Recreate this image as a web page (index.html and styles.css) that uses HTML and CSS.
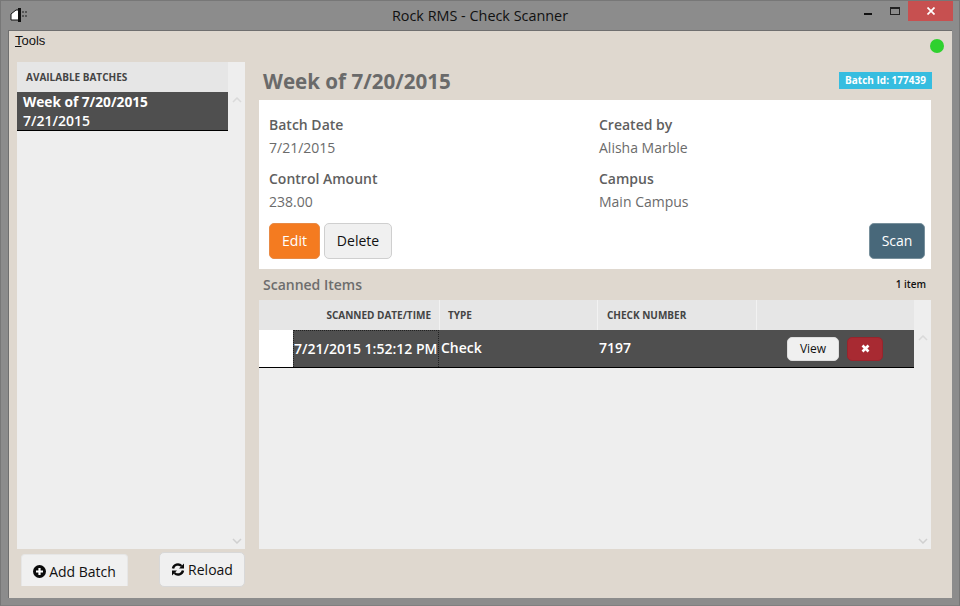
FILE: index.html
```html
<!DOCTYPE html>
<html lang="en">
<head>
<meta charset="utf-8">
<title>Rock RMS - Check Scanner</title>
<link rel="stylesheet" href="styles.css">
</head>
<body>
<div class="window">
  <header class="titlebar">
    <svg class="app-icon" width="18" height="14" viewBox="0 0 18 14"><path d="M1 12V6l5-4h3v10z" fill="#fff" stroke="#111" stroke-width="1"/><rect x="8" y="0" width="3" height="14" fill="#111"/><path d="M12 3h2v2h-2zM15 3h2v2h-2zM12 7h2v2h-2zM15 7h2v2h-2z" fill="#555"/></svg>
    <div class="title">Rock RMS - Check Scanner</div>
    <div class="controls">
      <svg class="ctl-min" width="8" height="2" viewBox="0 0 8 2"><rect width="8" height="2" fill="#111"/></svg>
      <svg class="ctl-max" width="10" height="8" viewBox="0 0 10 8"><rect x=".5" y=".5" width="9" height="7" fill="none" stroke="#222"/><rect x="0" y="0" width="10" height="2" fill="#222"/></svg>
      <div class="ctl-close"><svg width="8" height="8" viewBox="0 0 8 8"><path d="M.5.5l7 7M7.5.5l-7 7" stroke="#fff" stroke-width="1.7"/></svg></div>
    </div>
  </header>
  <div class="client">
    <div class="menubar"><span class="menu-item"><u>T</u>ools</span><span class="status-dot"></span></div>
    <div class="columns">
      <aside class="sidebar">
        <div class="batch-panel">
          <div class="batch-list">
            <div class="batch-head">AVAILABLE BATCHES</div>
            <div class="batch-row">
              <div class="batch-name">Week of 7/20/2015</div>
              <div class="batch-date">7/21/2015</div>
            </div>
          </div>
          <div class="scroll">
            <svg class="chev chev-up" width="10" height="6" viewBox="0 0 10 6"><path d="M1 5l4-4 4 4" fill="none" stroke="#dadada" stroke-width="1.5"/></svg>
            <svg class="chev" width="10" height="6" viewBox="0 0 10 6"><path d="M1 1l4 4 4-4" fill="none" stroke="#d0d0d0" stroke-width="1.5"/></svg>
          </div>
        </div>
        <div class="side-actions">
          <button class="side-btn add"><svg width="13" height="13" viewBox="0 0 13 13"><circle cx="6.5" cy="6.5" r="6.5" fill="#0a0a0a"/><path d="M3 6.5h7M6.5 3v7" stroke="#fff" stroke-width="2.2"/></svg>Add Batch</button>
          <button class="side-btn reload"><svg width="14" height="13" viewBox="0 0 14 13"><path d="M2 5.5A5 5 0 0 1 10.5 3" fill="none" stroke="#0a0a0a" stroke-width="2.4"/><path d="M13 .5v5H8z" fill="#0a0a0a"/><path d="M12 7.5A5 5 0 0 1 3.500 10" fill="none" stroke="#0a0a0a" stroke-width="2.4"/><path d="M1 12.500v-5h5z" fill="#0a0a0a"/></svg>Reload</button>
        </div>
      </aside>
      <main class="main">
        <div class="page-head">
          <h1>Week of 7/20/2015</h1>
          <span class="badge">Batch Id: 177439</span>
        </div>
        <section class="card">
          <div class="facts">
            <div class="fact"><div class="fact-label">Batch Date</div><div class="fact-value">7/21/2015</div></div>
            <div class="fact"><div class="fact-label">Created by</div><div class="fact-value">Alisha Marble</div></div>
            <div class="fact"><div class="fact-label">Control Amount</div><div class="fact-value">238.00</div></div>
            <div class="fact"><div class="fact-label">Campus</div><div class="fact-value">Main Campus</div></div>
          </div>
          <div class="card-actions">
            <button class="btn btn-edit">Edit</button>
            <button class="btn btn-delete">Delete</button>
            <button class="btn btn-scan">Scan</button>
          </div>
        </section>
        <div class="items-head"><h2>Scanned Items</h2><span class="count">1 item</span></div>
        <section class="grid">
          <div class="grid-body">
            <div class="grid-head">
              <div class="th th-date">SCANNED DATE/TIME</div>
              <div class="th th-type">TYPE</div>
              <div class="th th-num">CHECK NUMBER</div>
              <div class="th th-act"></div>
            </div>
            <div class="grid-row">
              <div class="td-blank"></div>
              <div class="td td-date">7/21/2015 1:52:12 PM</div>
              <div class="td td-type">Check</div>
              <div class="td td-num">7197</div>
              <div class="td-act">
                <button class="mini mini-view">View</button>
                <button class="mini mini-del"><svg width="9" height="9" viewBox="0 0 9 9"><path d="M1.500 1.500l6 6M7.500 1.500l-6 6" stroke="#fff" stroke-width="2.600"/></svg></button>
              </div>
            </div>
          </div>
          <div class="scroll">
            <svg class="chev chev-up-grid" width="10" height="6" viewBox="0 0 10 6"><path d="M1 5l4-4 4 4" fill="none" stroke="#dadada" stroke-width="1.5"/></svg>
            <svg class="chev" width="10" height="6" viewBox="0 0 10 6"><path d="M1 1l4 4 4-4" fill="none" stroke="#d0d0d0" stroke-width="1.5"/></svg>
          </div>
        </section>
      </main>
    </div>
  </div>
</div>
</body>
</html>
```
FILE: styles.css
```css
* { box-sizing: border-box; }
html, body { margin: 0; padding: 0; }
body { width: 960px; height: 606px; overflow: hidden; font-family: "Open Sans", sans-serif; }
button { font-family: inherit; cursor: default; padding: 0; }
h1, h2 { margin: 0; }

.window { width: 960px; height: 606px; background: #8c8c8c; border: 1px solid #777; border-bottom-color: #808080; display: flex; flex-direction: column; padding: 0 7px 7px; }

.titlebar { height: 29px; flex: none; display: flex; align-items: center; position: relative; }
.app-icon { margin: -2px 0 0 2px; }
.title { position: absolute; left: 0; right: 0; top: 5px; text-align: center; font-size: 14.4px; line-height: 19px; color: #111; font-family: "Open Sans", sans-serif; }
.controls { margin-left: auto; display: flex; align-items: flex-start; height: 100%; position: relative; margin-right: -1px; }
.ctl-min { margin: 12px 0 0 0; }
.ctl-max { margin: 6px 0 0 18px; }
.ctl-close { width: 45px; height: 20px; margin-left: 8px; background: #c75050; display: flex; align-items: center; justify-content: center; }

.client { flex: 1; min-height: 0; background: #dfd8cf; border: 1px solid #6f6f6f; border-width: 1px 0 0 1px; display: flex; flex-direction: column; }

.menubar { height: 31px; flex: none; display: flex; justify-content: space-between; padding: 1px 8px 0 6px; font-family: "Liberation Sans", sans-serif; }
.menu-item { font-size: 13px; line-height: 18px; color: #111; }
.status-dot { width: 14px; height: 14px; margin-top: 7px; border-radius: 50%; background: #2fd12f; }

.columns { flex: 1; min-height: 0; display: flex; padding: 0 21px 0 8px; }

.sidebar { width: 228px; flex: none; margin-right: 14px; display: flex; flex-direction: column; }
.batch-panel { height: 487px; flex: none; display: flex; background: #eeeeee; }
.batch-list { flex: 1; }
.batch-head { height: 30px; background: #e6e6e6; padding-left: 9px; font-size: 10px; font-weight: 700; line-height: 30px; color: #444; }
.batch-row { height: 39px; background: #4f4f4f; border-bottom: 1px solid #000; padding: 0 0 0 6px; color: #fff; font-size: 14px; line-height: 19px; }
.batch-name { font-weight: 700; font-size: 13.7px; }
.batch-date { font-weight: 600; }
.scroll { width: 17px; flex: none; display: flex; flex-direction: column; justify-content: space-between; align-items: center; padding: 35px 0 5px; background: #eeeeee; }
.chev { display: block; }

.side-actions { flex: 1; display: flex; justify-content: space-between; align-items: flex-start; padding: 3px 0 0 4px; }
.side-btn { display: flex; align-items: center; justify-content: center; gap: 3px; background: #f0f0f0; color: #111; font-size: 14px; border: 1px solid #e6e6e6; }
.side-btn.add { width: 107px; height: 32px; margin-top: 2px; border-radius: 4px 4px 0 0; border-bottom: 0; padding-top: 2px; }
.side-btn.reload { width: 86px; height: 35px; border-radius: 5px; border-color: #d8d8d8; }

.main { flex: 1; min-width: 0; display: flex; flex-direction: column; }
.page-head { height: 38px; flex: none; display: flex; justify-content: space-between; align-items: flex-start; padding-left: 4px; }
.page-head h1 { font-size: 20.6px; line-height: 38px; font-weight: 700; color: #6a6a6a; }
.badge { margin: 10px -1px 0 0; height: 17px; width: 93px; background: #36bde0; color: #fff; font-size: 10px; font-weight: 700; line-height: 17px; text-align: center; }

.card { height: 169px; flex: none; background: #fff; padding: 14px 6px 0 10px; display: flex; flex-direction: column; }
.facts { display: grid; grid-template-columns: 330px 1fr; grid-auto-rows: 54px; font-size: 14px; line-height: 22px; }
.fact-label { font-weight: 600; color: #5f5f5f; }
.fact-value { margin-top: 1px; color: #6b6b6b; }
.card-actions { display: flex; gap: 4px; margin-top: 1px; }
.btn { height: 36px; border-radius: 5px; font-size: 14px; padding-bottom: 2px; }
.btn-edit { width: 51px; background: #f47b20; border: 1px solid #e88a45; color: #fff; }
.btn-delete { width: 68px; background: #f0f0f0; border: 1px solid #cfcfcf; color: #111; }
.btn-scan { width: 56px; margin-left: auto; background: #48687a; border: 1px solid #78909c; color: #fff; }

.items-head { height: 31px; flex: none; display: flex; justify-content: space-between; align-items: center; padding: 0 5px 0 4px; }
.items-head h2 { font-size: 14px; font-weight: 600; color: #6d6d6d; }
.count { font-size: 10px; font-weight: 600; color: #111; margin-top: -1px; }

.grid { height: 249px; flex: none; display: flex; background: #eeeeee; }
.grid-body { flex: 1; }
.grid-head { height: 30px; display: grid; grid-template-columns: 181px 158px 159px 1fr; background: #e6e6e6; }
.th { font-size: 10px; font-weight: 700; line-height: 30px; color: #444; border-right: 1px solid #f2f2f2; padding-left: 8px; }
.th-date { text-align: right; padding-right: 8px; padding-left: 0; }
.th-num { padding-left: 9px; }
.th-act { border-right: 0; }
.grid-row { height: 38px; display: grid; grid-template-columns: 34px 146px 159px 160px 1fr; background: #4f4f4f; border-bottom: 1px solid #000; color: #fff; font-size: 14px; font-weight: 600; line-height: 36px; }
.td-blank { background: #fff; }
.td-date { border-left: 1px dotted #222; border-right: 1px dotted #222; border-top: 1px dotted #222; text-align: right; padding-right: 1px; white-space: nowrap; }
.td-type { padding-left: 2px; }
.td-num { padding-left: 1px; }
.td-act { display: flex; align-items: center; gap: 8px; padding: 0 0 0 29px; }
.mini { height: 24px; border-radius: 5px; font-size: 12px; }
.mini-view { width: 52px; background: #f0f0f0; border: 1px solid #ddd; color: #111; }
.mini-del { width: 36px; background: #a82a32; border: 1px solid #98242c; display: flex; align-items: center; justify-content: center; }
```
